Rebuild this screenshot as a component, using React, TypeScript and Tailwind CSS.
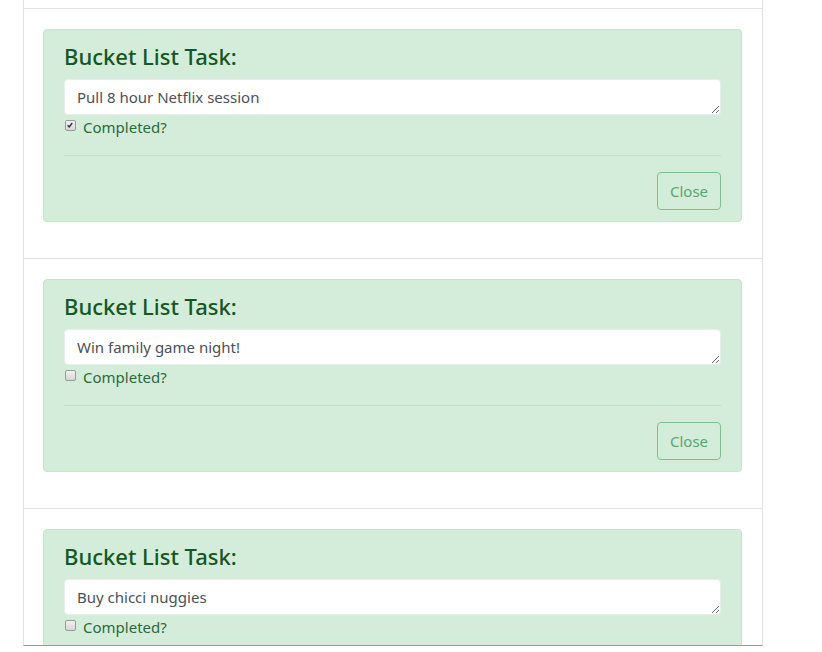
import React from "react";

const tasks = [
  { text: "Pull 8 hour Netflix session", done: true },
  { text: "Win family game night!", done: false },
  { text: "Buy chicci nuggies", done: false },
];

function Check({ checked }: { checked: boolean }) {
  return (
    <span className="relative mr-[7px] inline-block h-[11px] w-[11px] shrink-0 rounded-[2px] border border-[#9a9a9a] bg-gradient-to-b from-[#f2f2f2] to-[#d6d6d6]">
      {checked && (
        <svg viewBox="0 0 11 11" className="absolute left-[0px] top-[0px] h-[9px] w-[9px]">
          <path d="M2 5.2 L4 7.3 L7.6 2.4" fill="none" stroke="#333" strokeWidth="1.7" />
        </svg>
      )}
    </span>
  );
}

function Card({ text, done }: { text: string; done: boolean }) {
  return (
    <div className="h-[250px] shrink-0 border-t border-[#e3e3e3] px-[19px] pt-[20px]">
      <div className="mr-[1px] rounded-[4px] border border-[#c3e6cb] bg-[#d4edda] px-[20px] pt-[12px] pb-[11px] text-[#155724]">
        <h4 className="mb-[8px] text-[22px] leading-[29px] font-medium">Bucket List Task:</h4>
        <textarea
          readOnly
          defaultValue={text}
          className="block h-[36px] w-[657px] resize-y rounded-[4px] border border-[#e6f0e8] bg-white px-[12px] pt-[6px] text-[15px] leading-[22px] text-[#4a5157] outline-none"
          style={{ fontFamily: "inherit" }}
        />
        <label className="flex h-[24px] items-start pl-[1px] text-[15px] leading-[24px] text-[#2a6a3c]">
          <span className="mt-[5px] flex">
            <Check checked={done} />
          </span>
          <span>Completed?</span>
        </label>
        <hr className="mt-[16px] mb-[16px] border-0 border-t border-[#bfe0c7]" />
        <div className="flex justify-end">
          <button className="h-[38px] w-[64px] rounded-[4px] border border-[#7fbf8e] text-[15px] text-[#5aa56c]">
            Close
          </button>
        </div>
      </div>
    </div>
  );
}

export default function App() {
  return (
    <div
      className="h-[652px] w-[822px] bg-white"
      style={{ fontFamily: '"Noto Sans", "Open Sans", sans-serif' }}
    >
      <div className="ml-[23px] flex h-[646px] w-[740px] flex-col overflow-hidden border-x border-b border-x-[#e3e3e3] border-b-[#9a9a9a]">
        <div className="h-[8px] shrink-0" />
        {tasks.map((t, i) => (
          <Card key={i} text={t.text} done={t.done} />
        ))}
      </div>
    </div>
  );
}
